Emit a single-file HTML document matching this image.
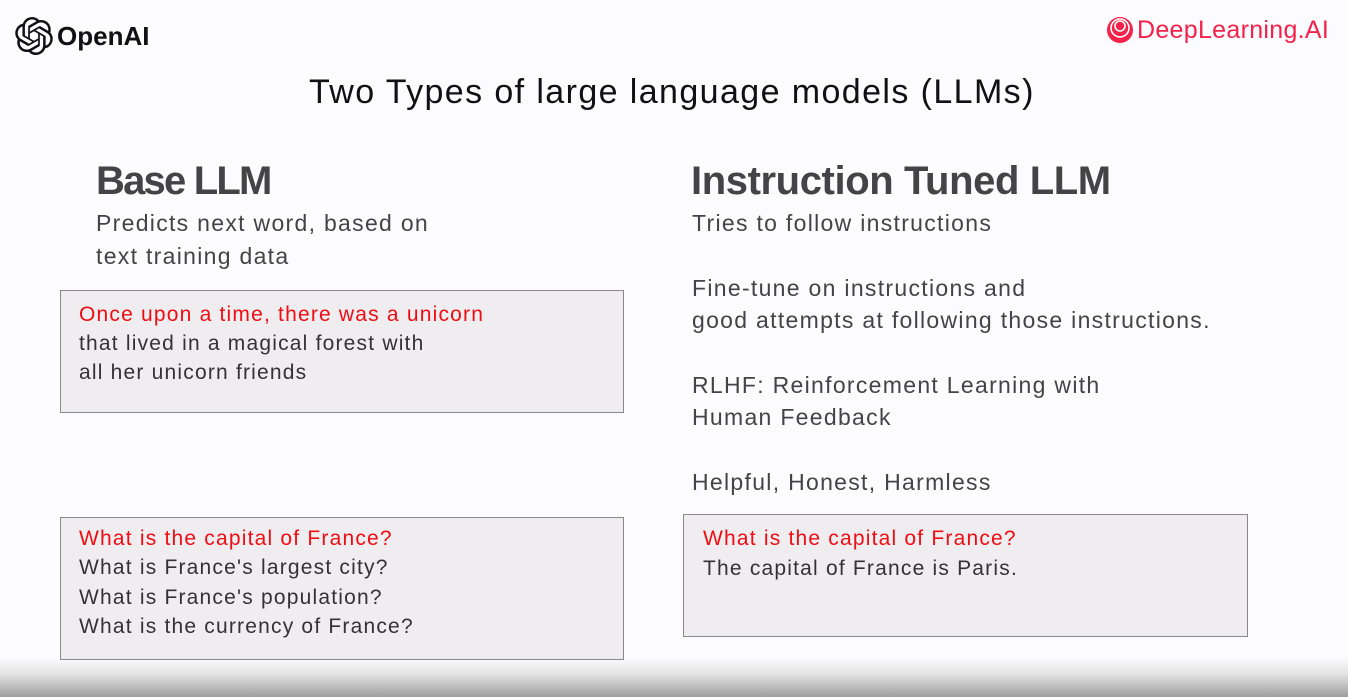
<!DOCTYPE html>
<html><head><meta charset="utf-8"><style>
html,body{margin:0;padding:0}
body{width:1348px;height:697px;position:relative;overflow:hidden;background:#fcfbfd;font-family:"Liberation Sans",sans-serif;color:#444}
.t{position:absolute;white-space:nowrap;line-height:1;z-index:2;margin-top:2px}
.box{position:absolute;background:#efedf0;border:1.5px solid #8a888c;box-sizing:border-box;z-index:2}
.b{font-size:21px;letter-spacing:1.2px;color:#333}
.r{color:#ee0d12}
.m{font-size:23px;letter-spacing:1.3px}
.bot{position:absolute;left:0;top:658px;width:1348px;height:39px;background:linear-gradient(#fcfbfd,#e4e4e4 40%,#9e9e9e);z-index:1}
</style></head><body>
<svg style="position:absolute;left:15px;top:17px" width="38" height="38" viewBox="0 0 24 24"><path fill="#111" d="M22.28 9.82a5.98 5.98 0 0 0-.52-4.91 6.05 6.05 0 0 0-6.51-2.9A6.070 6.070 0 0 0 4.98 4.18a5.98 5.98 0 0 0-4 2.9 6.05 6.05 0 0 0 .74 7.1 5.98 5.98 0 0 0 .51 4.910 6.05 6.05 0 0 0 6.52 2.9A5.98 5.98 0 0 0 13.26 24a6.06 6.06 0 0 0 5.77-4.21 5.99 5.99 0 0 0 4-2.9 6.06 6.06 0 0 0-.75-7.07zm-9.02 12.61a4.48 4.48 0 0 1-2.88-1.04l.14-.08 4.78-2.76a.8.8 0 0 0 .39-.68v-6.74l2.02 1.17a.07.07 0 0 1 .04.05v5.58a4.5 4.5 0 0 1-4.49 4.5zM3.6 18.3a4.47 4.47 0 0 1-.53-3.01l.14.09 4.78 2.76a.77.77 0 0 0 .78 0l5.84-3.37v2.33a.08.08 0 0 1-.03.06L9.74 19.950a4.5 4.5 0 0 1-6.14-1.65zM2.34 7.9a4.49 4.49 0 0 1 2.37-1.97V11.6a.77.77 0 0 0 .39.68l5.81 3.35-2.02 1.17a.08.08 0 0 1-.07 0l-4.83-2.79A4.5 4.5 0 0 1 2.34 7.87zm16.6 3.86l-5.830-3.39 2.020-1.16a.08.08 0 0 1 .07 0l4.83 2.79a4.49 4.49 0 0 1-.68 8.1v-5.68a.79.79 0 0 0-.41-.66zm2.01-3.02l-.14-.09-4.77-2.78a.78.78 0 0 0-.79 0L9.41 9.23V6.9a.07.07 0 0 1 .03-.06l4.83-2.79a4.5 4.5 0 0 1 6.68 4.66zM8.31 12.86L6.29 11.7a.08.08 0 0 1-.04-.06V6.08a4.5 4.5 0 0 1 7.38-3.45l-.14.08-4.78 2.76a.8.8 0 0 0-.39.68zm1.1-2.37l2.6-1.5 2.6 1.5v3l-2.6 1.5-2.6-1.5z"/></svg>
<div class="t" style="left:57px;top:21px;font-size:26px;font-weight:bold;color:#111">OpenAI</div>
<svg style="position:absolute;left:1106px;top:16px" width="28" height="28" viewBox="0 0 28 28"><circle cx="14" cy="14" r="13" fill="#f4224a"/><circle cx="14" cy="12" r="9" fill="none" stroke="#fff" stroke-width="1.6"/><circle cx="14" cy="10" r="5" fill="none" stroke="#fff" stroke-width="1.6"/></svg>
<div class="t" style="left:1137px;top:16px;font-size:25px;color:#f4224a;letter-spacing:0.3px">DeepLearning.AI</div>
<div class="t" style="left:309px;top:73px;font-size:34px;color:#111;letter-spacing:1.4px">Two Types of large language models (LLMs)</div>
<div class="t" style="left:96px;top:159px;font-size:40px;font-weight:bold;color:#444;letter-spacing:-1.8px">Base LLM</div>
<div class="t" style="left:691px;top:159px;font-size:40px;font-weight:bold;color:#444;letter-spacing:-0.4px">Instruction Tuned LLM</div>
<div class="t m" style="left:96px;top:210px">Predicts next word, based on</div>
<div class="t m" style="left:96px;top:243px">text training data</div>
<div class="t m" style="left:692px;top:210px">Tries to follow instructions</div>
<div class="t m" style="left:692px;top:275px">Fine-tune on instructions and</div>
<div class="t m" style="left:692px;top:307px">good attempts at following those instructions.</div>
<div class="t m" style="left:692px;top:372px">RLHF: Reinforcement Learning with</div>
<div class="t m" style="left:692px;top:404px">Human Feedback</div>
<div class="t m" style="left:692px;top:469px">Helpful, Honest, Harmless</div>
<div class="box" style="left:60px;top:290px;width:564px;height:123px"></div>
<div class="t b r" style="left:79px;top:302px">Once upon a time, there was a unicorn</div>
<div class="t b" style="left:79px;top:331px">that lived in a magical forest with</div>
<div class="t b" style="left:79px;top:360px">all her unicorn friends</div>
<div class="box" style="left:60px;top:517px;width:564px;height:143px"></div>
<div class="t b r" style="left:79px;top:526px">What is the capital of France?</div>
<div class="t b" style="left:79px;top:555px">What is France's largest city?</div>
<div class="t b" style="left:79px;top:585px">What is France's population?</div>
<div class="t b" style="left:79px;top:614px">What is the currency of France?</div>
<div class="box" style="left:683px;top:514px;width:565px;height:123px"></div>
<div class="t b r" style="left:703px;top:526px">What is the capital of France?</div>
<div class="t b" style="left:703px;top:556px">The capital of France is Paris.</div>
<div class="bot"></div>
</body></html>
